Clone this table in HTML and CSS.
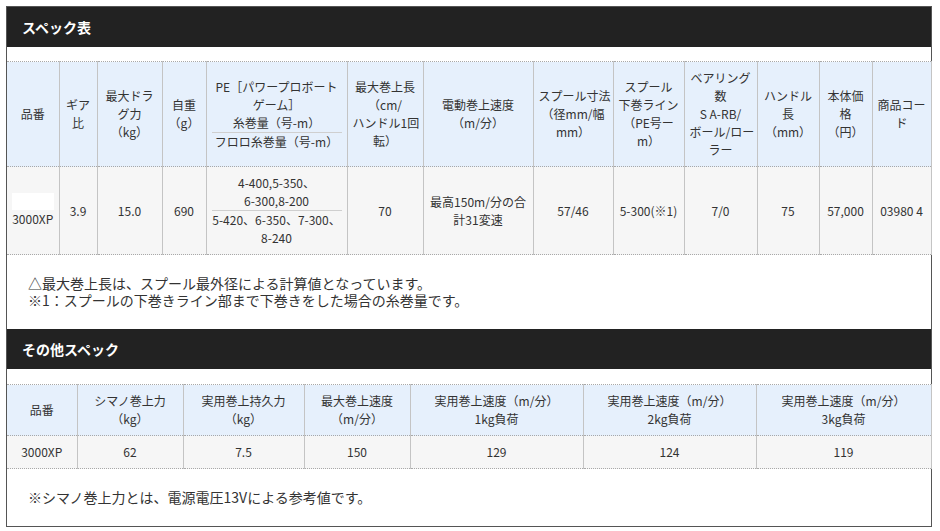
FILE: index.html
```html
<!DOCTYPE html>
<html lang="ja">
<head>
<meta charset="utf-8">
<title>スペック表</title>
<link rel="stylesheet" href="styles.css">
</head>
<body>
<div class="box">
  <section class="sec">
    <h2 class="bar">スペック表</h2>
    <table class="spec t1">
      <colgroup>
        <col class="w52"><col class="w38"><col class="w65"><col class="w44"><col class="w141"><col class="w76"><col class="w110"><col class="w80"><col class="w71"><col class="w73"><col class="w62"><col class="w53"><col class="w59">
      </colgroup>
      <thead>
        <tr>
          <th>品番</th>
          <th>ギア<br>比</th>
          <th>最大ドラ<br>グ力<br>（kg）</th>
          <th>自重<br>（g）</th>
          <th><div class="split">PE［パワープロボート<br>ゲーム］<br>糸巻量（号-m）</div><div>フロロ糸巻量（号-m）</div></th>
          <th>最大巻上長<br>（cm/<br>ハンドル1回<br>転）</th>
          <th>電動巻上速度<br>（m/分）</th>
          <th>スプール寸法<br>（径mm/幅<br>mm）</th>
          <th>スプール<br>下巻ライン<br>（PE号ー<br>m）</th>
          <th>ベアリング<br>数<br>S A-RB/<br>ボール/ロー<br>ラー</th>
          <th>ハンドル<br>長<br>（mm）</th>
          <th>本体価<br>格<br>（円）</th>
          <th>商品コー<br>ド</th>
        </tr>
      </thead>
      <tbody>
        <tr>
          <td><span class="thumb"></span>3000XP</td>
          <td>3.9</td>
          <td>15.0</td>
          <td>690</td>
          <td><div class="split">4-400,5-350、<br>6-300,8-200</div><div>5-420、6-350、7-300、<br>8-240</div></td>
          <td>70</td>
          <td>最高150m/分の合<br>計31変速</td>
          <td>57/46</td>
          <td>5-300(※1)</td>
          <td>7/0</td>
          <td>75</td>
          <td>57,000</td>
          <td>03980 4</td>
        </tr>
      </tbody>
    </table>
    <p class="note">△最大巻上長は、スプール最外径による計算値となっています。<br>※1：スプールの下巻きライン部まで下巻きをした場合の糸巻量です。</p>
  </section>
  <section class="sec">
    <h2 class="bar">その他スペック</h2>
    <table class="spec t2">
      <colgroup>
        <col class="w70"><col class="w106"><col class="w121"><col class="w106"><col class="w173"><col class="w173"><col class="w175">
      </colgroup>
      <thead>
        <tr>
          <th>品番</th>
          <th>シマノ巻上力<br>（kg）</th>
          <th>実用巻上持久力<br>（kg）</th>
          <th>最大巻上速度<br>（m/分）</th>
          <th>実用巻上速度（m/分）<br>1kg負荷</th>
          <th>実用巻上速度（m/分）<br>2kg負荷</th>
          <th>実用巻上速度（m/分）<br>3kg負荷</th>
        </tr>
      </thead>
      <tbody>
        <tr>
          <td>3000XP</td>
          <td>62</td>
          <td>7.5</td>
          <td>150</td>
          <td>129</td>
          <td>124</td>
          <td>119</td>
        </tr>
      </tbody>
    </table>
    <p class="note">※シマノ巻上力とは、電源電圧13Vによる参考値です。</p>
  </section>
</div>
</body>
</html>
```

FILE: styles.css
```css
html, body {
  margin: 0;
  padding: 0;
  background: #fff;
}
body {
  font-family: "Noto Sans CJK JP", "Noto Sans", sans-serif;
  color: #333;
  padding: 6px 0 0 6px;
  text-spacing-trim: space-all;
}
.box {
  width: 924px;
  border: 1px solid #555;
  background: #fff;
}
.bar {
  margin: 0;
  height: 40px;
  line-height: 40px;
  padding-left: 15px;
  background: #222;
  color: #fff;
  font-size: 14px;
  font-weight: bold;
}
.spec {
  width: 924px;
  table-layout: fixed;
  border-collapse: collapse;
  margin-top: 14px;
  font-size: 12px;
  line-height: 18px;
}
.spec th,
.spec td {
  padding: 7px 5px;
  text-align: center;
  vertical-align: middle;
  font-weight: normal;
  border-top: 1px dotted #a8a8a8;
  border-bottom: 1px dotted #a8a8a8;
  border-right: 1px solid #c4c4c4;
  border-left: 0;
  white-space: nowrap;
}
.spec th {
  background: #e6f0fc;
}
.spec td {
  background: #f6f6f6;
}
.split {
  border-bottom: 1px solid #cfcfcf;
}
.thumb {
  display: block;
  width: 42px;
  height: 17px;
  margin: 0 auto;
  background: #fff;
}
.note {
  margin: 20px 0 20px 21px;
  font-size: 14px;
  line-height: 17px;
}
.t2 {
  margin-top: 15px;
}
.w52 { width: 52px; }
.w38 { width: 38px; }
.w65 { width: 65px; }
.w44 { width: 44px; }
.w141 { width: 141px; }
.w76 { width: 76px; }
.w110 { width: 110px; }
.w80 { width: 80px; }
.w71 { width: 71px; }
.w73 { width: 73px; }
.w62 { width: 62px; }
.w53 { width: 53px; }
.w59 { width: 59px; }
.w70 { width: 70px; }
.w106 { width: 106px; }
.w121 { width: 121px; }
.w173 { width: 173px; }
.w175 { width: 175px; }
```
